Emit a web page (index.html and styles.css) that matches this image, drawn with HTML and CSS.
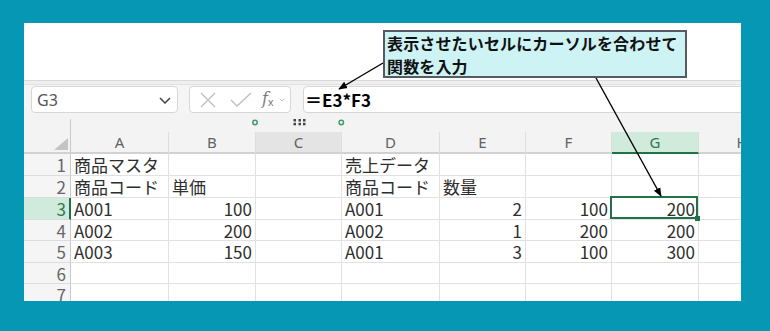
FILE: index.html
```html
<!DOCTYPE html>
<html lang="ja">
<head>
    <meta charset="UTF-8">
    <title>Excel 関数の入力</title>
    <link rel="stylesheet" href="styles.css">
</head>
<body>
    <div class="panel">
        <div class="top-gap"></div>

        <div class="formula-bar">
            <div class="name-box">
                <span>G3</span>
                <svg class="chev" width="12" height="7" viewBox="0 0 12 7">
                    <polyline points="1,1 6,6 11,1" fill="none" stroke="#444" stroke-width="1.5"/>
                </svg>
            </div>
            <div class="fx-box">
                <svg class="fx-icon" width="16" height="16" viewBox="0 0 16 16">
                    <path d="M1 1 L15 15 M15 1 L1 15" stroke="#bdbdbd" stroke-width="1.3" fill="none"/>
                </svg>
                <svg class="fx-icon" width="22" height="15" viewBox="0 0 22 15">
                    <polyline points="1,8 7,14 21,1" fill="none" stroke="#bdbdbd" stroke-width="1.3"/>
                </svg>
                <span class="fx-label"><i>f</i><sub>x</sub></span>
                <svg width="6" height="4" viewBox="0 0 6 4">
                    <polyline points="0.5,0.5 3,3 5.5,0.5" fill="none" stroke="#c4c4c4" stroke-width="1"/>
                </svg>
            </div>
            <div class="formula-input">＝E3*F3</div>
        </div>

        <div class="strip">
            <div class="strip-corner"></div>
            <svg class="strip-marks" width="300" height="19" viewBox="0 0 300 19">
                <circle cx="184" cy="9.5" r="2.2" fill="none" stroke="#3f9c62" stroke-width="1.5"/>
                <circle cx="270.3" cy="9.5" r="2.2" fill="none" stroke="#3f9c62" stroke-width="1.5"/>
                <g fill="#444">
                    <rect x="222.5" y="6" width="2.5" height="2.5"/>
                    <rect x="227.5" y="6" width="2.5" height="2.5"/>
                    <rect x="232" y="6" width="2.5" height="2.5"/>
                    <rect x="222.5" y="9.8" width="2.5" height="2.5"/>
                    <rect x="227.5" y="9.8" width="2.5" height="2.5"/>
                    <rect x="232" y="9.8" width="2.5" height="2.5"/>
                </g>
            </svg>
        </div>

        <div class="sheet">
            <div class="corner"><div class="tri"></div></div>
            <div class="col-head">A</div>
            <div class="col-head">B</div>
            <div class="col-head hover">C</div>
            <div class="col-head">D</div>
            <div class="col-head">E</div>
            <div class="col-head">F</div>
            <div class="col-head active">G</div>
            <div class="col-head">H</div>

            <div class="row-head">1</div>
            <div class="cell">商品マスタ</div>
            <div class="cell"></div>
            <div class="cell"></div>
            <div class="cell">売上データ</div>
            <div class="cell"></div>
            <div class="cell"></div>
            <div class="cell"></div>
            <div class="cell"></div>

            <div class="row-head">2</div>
            <div class="cell">商品コード</div>
            <div class="cell">単価</div>
            <div class="cell"></div>
            <div class="cell">商品コード</div>
            <div class="cell">数量</div>
            <div class="cell"></div>
            <div class="cell"></div>
            <div class="cell"></div>

            <div class="row-head active">3</div>
            <div class="cell">A001</div>
            <div class="cell num">100</div>
            <div class="cell"></div>
            <div class="cell">A001</div>
            <div class="cell num">2</div>
            <div class="cell num">100</div>
            <div class="cell num selected">200</div>
            <div class="cell"></div>

            <div class="row-head">4</div>
            <div class="cell">A002</div>
            <div class="cell num">200</div>
            <div class="cell"></div>
            <div class="cell">A002</div>
            <div class="cell num">1</div>
            <div class="cell num">200</div>
            <div class="cell num">200</div>
            <div class="cell"></div>

            <div class="row-head">5</div>
            <div class="cell">A003</div>
            <div class="cell num">150</div>
            <div class="cell"></div>
            <div class="cell">A001</div>
            <div class="cell num">3</div>
            <div class="cell num">100</div>
            <div class="cell num">300</div>
            <div class="cell"></div>

            <div class="row-head">6</div>
            <div class="cell"></div>
            <div class="cell"></div>
            <div class="cell"></div>
            <div class="cell"></div>
            <div class="cell"></div>
            <div class="cell"></div>
            <div class="cell"></div>
            <div class="cell"></div>

            <div class="row-head">7</div>
            <div class="cell"></div>
            <div class="cell"></div>
            <div class="cell"></div>
            <div class="cell"></div>
            <div class="cell"></div>
            <div class="cell"></div>
            <div class="cell"></div>
            <div class="cell"></div>
        </div>

        <div class="callout">表示させたいセルにカーソルを合わせて<br>関数を入力</div>

        <svg class="arrows" width="717" height="278" viewBox="0 0 717 278">
            <defs>
                <marker id="head" viewBox="0 0 10 10" refX="9" refY="5"
                        markerWidth="9" markerHeight="9" markerUnits="userSpaceOnUse" orient="auto">
                    <path d="M0,1 L10,5 L0,9 z" fill="#000"/>
                </marker>
            </defs>
            <line x1="359" y1="40" x2="315" y2="66" stroke="#000" stroke-width="1.4" marker-end="url(#head)"/>
            <line x1="572" y1="55" x2="637" y2="173" stroke="#000" stroke-width="1.4" marker-end="url(#head)"/>
        </svg>
    </div>
</body>
</html>
```

FILE: styles.css
```css
body {
    margin: 0;
    background-color: #0597b3;
    font-family: "Noto Sans CJK JP", "Noto Sans", sans-serif;
}

.panel {
    position: relative;
    margin: 23px 0 0 24px;
    width: 717px;
    height: 278px;
    background-color: #fff;
    overflow: hidden;
}

.top-gap {
    height: 57px;
}

/* formula bar */
.formula-bar {
    display: flex;
    height: 33px;
    box-sizing: border-box;
    padding-top: 6px;
    background: linear-gradient(#d9d9d9 0 1px, #efefef 1px 4px, #e2e2e2 4px 5px, #f5f5f5 5px);
}

.name-box,
.fx-box,
.formula-input {
    height: 27px;
    box-sizing: border-box;
    background-color: #fff;
    border: 1px solid #d6d6d6;
    border-radius: 4px;
    display: flex;
    align-items: center;
}

.name-box {
    width: 147px;
    margin-left: 7px;
    padding: 0 5px;
    justify-content: space-between;
    font-family: "Noto Sans", sans-serif;
    font-size: 16px;
    color: #555;
}

.name-box .chev {
    margin-right: 1px;
    margin-top: 2px;
}

.fx-box {
    width: 102px;
    margin-left: 11px;
    padding-left: 10px;
}

.fx-icon {
    margin-right: 14px;
}

.fx-box .fx-icon:nth-child(2) {
    margin-right: 10px;
}

.fx-label {
    font-family: "DejaVu Serif", serif;
    font-size: 16px;
    color: #7a7a7a;
    margin-right: 6px;
    line-height: 1;
}

.fx-label sub {
    font-family: "Liberation Sans", sans-serif;
    font-size: 11px;
    font-style: normal;
    vertical-align: -2px;
}

.formula-input {
    flex: 1;
    margin-left: 12px;
    margin-right: -20px;
    padding-left: 1px;
    font-size: 17px;
    font-weight: bold;
    color: #000;
    border-top-right-radius: 0;
}

/* strip between formula bar and columns */
.strip {
    display: flex;
    height: 19px;
    background-color: #f3f3f3;
}

.strip-corner {
    width: 47px;
    height: 13px;
    margin-top: 6px;
    box-sizing: border-box;
    border-right: 1px solid #c8c8c8;
}

/* sheet grid */
.sheet {
    display: grid;
    grid-template-columns: 47px 98px 87px 86px 98px 86px 86px 87px 87px;
    grid-template-rows: 22px 22px 22px 22px 21px 22px 21px 22px;
    font-size: 17px;
    color: #2e2e2e;
}

.sheet > div {
    box-sizing: border-box;
    border-right: 1px solid #e1e1e1;
    border-bottom: 1px solid #e1e1e1;
    line-height: 21px;
    white-space: nowrap;
}

.corner {
    display: flex;
    justify-content: flex-end;
    align-items: flex-end;
    padding: 0 2px 2px 0;
    background-color: #f3f3f3;
}

.sheet > .corner,
.sheet > .row-head {
    border-right: 1px solid #c8c8c8;
}

.tri {
    width: 0;
    height: 0;
    border-left: 14px solid transparent;
    border-bottom: 12px solid #c4c4c4;
}

.sheet > .corner,
.sheet > .col-head {
    border-bottom: 2px solid #d2d2d2;
}

.col-head {
    background-color: #f3f3f3;
    text-align: center;
    font-family: "Noto Sans", sans-serif;
    font-size: 15px;
    color: #616161;
    line-height: 20px !important;
}

.sheet > .col-head {
    border-right-color: #dedede;
}

.col-head.hover {
    background-color: #e4e4e4;
}

.sheet > .col-head.active {
    background-color: #d0eadb;
    color: #2f7550;
    border-bottom-color: #217346;
}

.row-head {
    background-color: #f5f5f5;
    text-align: right;
    padding-right: 4px;
    color: #666;
    font-size: 17px;
}

.sheet > .row-head {
    border-bottom-color: #dcdcdc;
}

.sheet > .row-head.active {
    background-color: #d0eadb;
    color: #2f7550;
    border-right: 2px solid #217346;
    padding-right: 3px;
}

.cell {
    padding-left: 3px;
}

.cell.num {
    text-align: right;
    padding-right: 3px;
}

.cell.selected {
    position: relative;
}

.cell.selected::after {
    content: "";
    position: absolute;
    left: -2px;
    top: -2px;
    right: 0;
    bottom: 0;
    border: 2px solid #217346;
}

.cell.selected::before {
    content: "";
    position: absolute;
    right: -2px;
    bottom: -2px;
    width: 5px;
    height: 5px;
    background-color: #217346;
    z-index: 1;
}

/* annotation */
.callout {
    position: absolute;
    left: 359px;
    top: 7px;
    width: 304px;
    height: 48px;
    box-sizing: border-box;
    border: 2px solid #565b63;
    background-color: #cdf3f5;
    padding-left: 2px;
    font-size: 16px;
    font-weight: bold;
    line-height: 23px;
    letter-spacing: 0.15px;
    color: #111;
    z-index: 3;
}

.arrows {
    position: absolute;
    left: 0;
    top: 0;
    pointer-events: none;
    z-index: 2;
}
```
